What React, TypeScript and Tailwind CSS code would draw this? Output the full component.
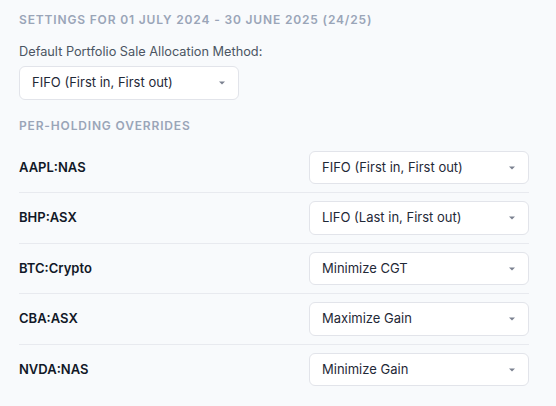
import React from "react";

const rows = [
  { sym: "AAPL:NAS", val: "FIFO (First in, First out)" },
  { sym: "BHP:ASX", val: "LIFO (Last in, First out)" },
  { sym: "BTC:Crypto", val: "Minimize CGT" },
  { sym: "CBA:ASX", val: "Maximize Gain" },
  { sym: "NVDA:NAS", val: "Minimize Gain" },
];

function Select({ value, className = "" }: { value: string; className?: string }) {
  return (
    <div
      className={
        "flex h-[33.5px] items-center justify-between rounded-[6px] border border-[#e2e4ea] bg-white pl-[12px] pr-[13px] " +
        className
      }
    >
      <span className="text-[13px] text-[#1f2937]">{value}</span>
      <svg width="6" height="4" viewBox="0 0 6 4" className="mt-[1px]">
        <path d="M0 0.5 L6 0.5 L3 3.5 Z" fill="#7b8190" />
      </svg>
    </div>
  );
}

export default function App() {
  return (
    <div
      className="min-h-[406px] w-[556px] bg-[#f8fafc] pl-[19px] pr-[27px] pt-[12px]"
      style={{ fontFamily: "Inter, 'Noto Sans', sans-serif" }}
    >
      <div className="text-[12px] font-semibold uppercase tracking-[0.07em] text-[#9aa5b8] leading-[16px]">
        Settings for 01 July 2024 - 30 June 2025 (24/25)
      </div>
      <div className="mt-[16px] text-[12.75px] leading-[16px] text-[#4b5563]">
        Default Portfolio Sale Allocation Method:
      </div>
      <Select value="FIFO (First in, First out)" className="mt-[6px] w-[220px]" />
      <div className="mt-[18px] text-[12px] font-semibold uppercase tracking-[0.07em] text-[#9aa5b8] leading-[16px]">
        Per-Holding Overrides
      </div>
      <div className="mt-[9px] flex flex-col">
        {rows.map((r, i) => (
          <div
            key={r.sym}
            className={
              "flex items-center justify-between py-[8px] " +
              (i < rows.length - 1 ? "border-b border-[#e8eaef]" : "")
            }
          >
            <span className="text-[13px] font-semibold text-[#111827]">{r.sym}</span>
            <Select value={r.val} className="w-[220px]" />
          </div>
        ))}
      </div>
    </div>
  );
}
